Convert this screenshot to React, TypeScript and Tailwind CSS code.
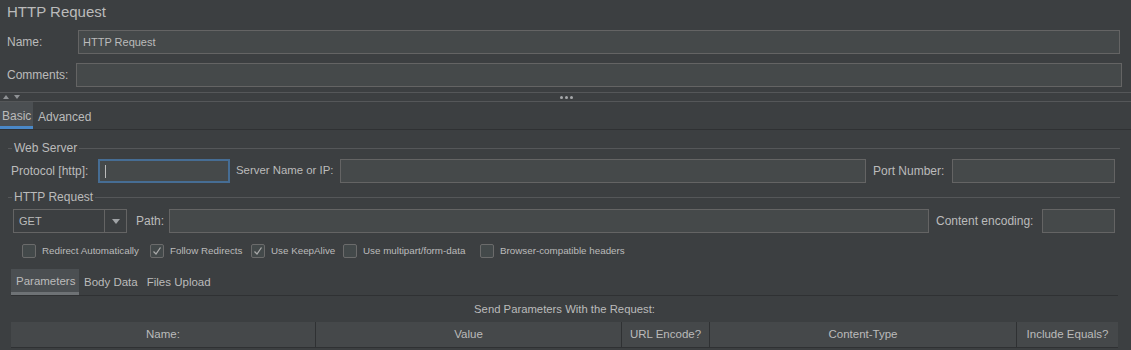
import React from 'react';

const line = 'bg-[#555759]';

function TitledBorder({ title }: { title: string }) {
  return (
    <div className="flex items-center h-[16px] pl-[8px] pr-[11px]">
      <div className={`w-[4px] h-px ${line}`} />
      <span className="px-[2px] text-[12px] leading-none">{title}</span>
      <div className={`flex-1 h-px ${line}`} />
    </div>
  );
}

function Field({ className = '', value = '', focused = false }: { className?: string; value?: string; focused?: boolean }) {
  return (
    <div
      className={`h-[24px] flex items-center px-[4px] text-[11px] bg-[#45494a] ${
        focused ? 'border-2 border-[#466d94]' : 'border border-[#646464]'
      } ${className}`}
    >
      {focused ? <div className="w-px h-[13px] bg-[#bbbbbb] ml-[1px]" /> : value}
    </div>
  );
}

function Check({ label, checked = false, w }: { label: string; checked?: boolean; w: string }) {
  return (
    <div className={`flex items-center ${w}`}>
      <div className="w-[14px] h-[14px] border border-[#6b6b6b] bg-[#43494a] rounded-[2px] flex items-center justify-center">
        {checked && (
          <svg width="10" height="10" viewBox="0 0 10 10">
            <path d="M1.5 5.5 L4 8 L8.5 1.5" fill="none" stroke="#a9a9a9" strokeWidth="1.3" />
          </svg>
        )}
      </div>
      <span className="ml-[6px] text-[9.8px] whitespace-nowrap">{label}</span>
    </div>
  );
}

const columns = [
  { label: 'Name:', w: 'w-[305px]' },
  { label: 'Value', w: 'w-[306px]' },
  { label: 'URL Encode?', w: 'w-[88px]' },
  { label: 'Content-Type', w: 'w-[307px]' },
  { label: 'Include Equals?', w: 'flex-1' },
];

export default function App() {
  return (
    <div className="w-[1131px] h-[350px] overflow-hidden bg-[#3c3f41] text-[#bbbbbb] font-['Liberation_Sans',sans-serif]">
      <div className="h-[24px] leading-[24px] pl-[7px] text-[15px]">HTTP Request</div>

      <div className="flex items-center mt-[6px] pr-[11px]">
        <span className="w-[78px] pl-[7px] text-[12px]">Name:</span>
        <Field className="flex-1" value="HTTP Request" />
      </div>
      <div className="flex items-center mt-[9px] pr-[9px]">
        <span className="w-[76px] pl-[7px] text-[12px]">Comments:</span>
        <Field className="flex-1" />
      </div>

      {/* split divider */}
      <div className="mt-[5px] h-[10px] border-y border-[#555759] flex items-center">
        <svg width="22" height="8" viewBox="0 0 22 8" className="ml-[2px]">
          <path d="M1 6 L4 2 L7 6 Z" fill="#8f9295" />
          <path d="M12 2 L18 2 L15 6 Z" fill="#8f9295" />
        </svg>
        <div className="flex gap-[2px] ml-[536px]">
          <div className="w-[3px] h-[3px] rounded-full bg-[#a6a8aa]" />
          <div className="w-[3px] h-[3px] rounded-full bg-[#a6a8aa]" />
          <div className="w-[3px] h-[3px] rounded-full bg-[#a6a8aa]" />
        </div>
      </div>

      {/* main tabs */}
      <div className="flex h-[28px] border-b border-[#2f3133] text-[12px]">
        <div className="h-[27px] w-[33px] bg-[#4b4f52] border-b-[3px] border-[#4a88c7] flex items-center pl-[2px] pt-[3px]">Basic</div>
        <div className="h-[27px] flex items-center pl-[5px] pt-[3px]">Advanced</div>
      </div>

      <div className="mt-[10px]">
        <TitledBorder title="Web Server" />
      </div>
      <div className="flex items-center mt-[3px] pl-[11px] pr-[16px] text-[12px]">
        <span className="w-[87px] whitespace-nowrap">Protocol [http]:</span>
        <Field className="w-[132px]" focused />
        <span className="w-[110px] pl-[6px] whitespace-nowrap text-[11.4px]">Server Name or IP:</span>
        <Field className="flex-1" />
        <span className="w-[86px] pl-[7px] whitespace-nowrap">Port Number:</span>
        <Field className="w-[163px]" />
      </div>

      <div className="mt-[6px]">
        <TitledBorder title="HTTP Request" />
      </div>
      <div className="flex items-center mt-[4px] pl-[13px] pr-[16px] text-[12px]">
        <div className="w-[114px] h-[24px] border border-[#646464] bg-[#3c3f41] flex items-center">
          <span className="flex-1 pl-[5px] text-[11px]">GET</span>
          <div className="w-[22px] h-full border-l border-[#646464] flex items-center justify-center">
            <svg width="8" height="5" viewBox="0 0 8 5">
              <path d="M0 0 L8 0 L4 5 Z" fill="#a0a3a6" />
            </svg>
          </div>
        </div>
        <span className="w-[42px] pl-[9px]">Path:</span>
        <Field className="flex-1" />
        <span className="w-[113px] pl-[7px] whitespace-nowrap">Content encoding:</span>
        <Field className="w-[73px]" />
      </div>

      <div className="flex items-center mt-[11px] pl-[22px] h-[14px]">
        <Check label="Redirect Automatically" w="w-[128px]" />
        <Check label="Follow Redirects" checked w="w-[101px]" />
        <Check label="Use KeepAlive" checked w="w-[92px]" />
        <Check label="Use multipart/form-data" w="w-[137px]" />
        <Check label="Browser-compatible headers" w="w-[160px]" />
      </div>

      {/* inner tabs */}
      <div className="mt-[11px] ml-[11px] mr-[13px]">
        <div className="flex h-[27px] border-b border-[#2f3133] text-[11.5px]">
          <div className="h-[26px] w-[68px] bg-[#4b4f52] border-b-[3px] border-[#6e7275] flex items-center pl-[5px] pt-[2px]">Parameters</div>
          <div className="h-[26px] flex items-center pl-[5px] pt-[2px]">Body Data</div>
          <div className="h-[26px] flex items-center pl-[9px] pt-[2px]">Files Upload</div>
        </div>
        <div className="h-[26px] flex items-center justify-center text-[11.3px]">Send Parameters With the Request:</div>
        <div className="flex h-[26px] bg-[#45484a] border-b border-[#2f3133] text-[11.5px]">
          {columns.map((c, i) => (
            <div
              key={c.label}
              className={`${c.w} flex items-center justify-center ${i < columns.length - 1 ? 'border-r border-[#2f3133]' : ''}`}
            >
              {c.label}
            </div>
          ))}
        </div>
      </div>
    </div>
  );
}
